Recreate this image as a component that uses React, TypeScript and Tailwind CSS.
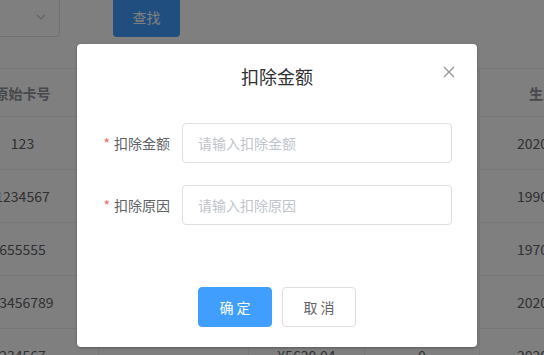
import React from "react";

const font = { fontFamily: '"Noto Sans CJK SC", "Noto Sans", sans-serif' };

const rows = [
  { card: "123", amount: "", count: "", date: "2020-09-10" },
  { card: "1234567", amount: "", count: "", date: "1990-01-01" },
  { card: "655555", amount: "", count: "", date: "1970-01-01" },
  { card: "23456789", amount: "", count: "", date: "2020-09-10" },
  { card: "234567", amount: "¥5620.04", count: "0", date: "2020-09-10" },
];

function ChevronDown() {
  return (
    <svg width="12" height="12" viewBox="0 0 12 12" fill="none">
      <path d="M2 4l4 4 4-4" stroke="#c0c4cc" strokeWidth="1.2" />
    </svg>
  );
}

function CloseIcon() {
  return (
    <svg width="12" height="12" viewBox="0 0 12 12" fill="none">
      <path d="M1 1l10 10M11 1L1 11" stroke="#909399" strokeWidth="1.2" />
    </svg>
  );
}

function FormRow({ label, placeholder }: { label: string; placeholder: string }) {
  return (
    <div className="flex items-center mb-[22px]">
      <label className="w-[80px] pr-3 text-right text-sm text-[#606266] leading-10 shrink-0">
        <span className="text-[#f56c6c] mr-1">*</span>
        {label}
      </label>
      <input
        className="flex-1 h-10 border border-[#dcdfe6] rounded px-[15px] text-sm text-[#606266] placeholder:text-[#c0c4cc] outline-none"
        placeholder={placeholder}
        style={font}
      />
    </div>
  );
}

export default function App() {
  return (
    <div className="relative w-[544px] h-[355px] overflow-hidden bg-white" style={font}>
      {/* Page behind */}
      <div className="flex items-end gap-[53px] -mt-[3px]">
        <div className="w-[80px] h-10 -ml-[20px] border border-[#dcdfe6] rounded flex items-center justify-end pr-[12px]">
          <ChevronDown />
        </div>
        <button className="w-[67px] h-10 rounded bg-[#409eff] text-white text-sm">查找</button>
      </div>

      <div className="mt-[31px] -ml-[53px] w-[700px] text-sm text-[#606266]">
        <div className="flex h-[49px] border-t border-b border-[#ebeef5] font-bold text-[#909399]">
          <div className="w-[152px] flex items-center justify-center border-r border-[#ebeef5]">原始卡号</div>
          <div className="w-[150px] border-r border-[#ebeef5]" />
          <div className="w-[116px] border-r border-[#ebeef5]" />
          <div className="w-[115px] border-r border-[#ebeef5]" />
          <div className="w-[120px] flex items-center pl-[49px] whitespace-nowrap">生成时间</div>
        </div>
        {rows.map((r) => (
          <div key={r.card} className="flex h-[53px] border-b border-[#ebeef5]">
            <div className="w-[152px] flex items-center justify-center border-r border-[#ebeef5]">{r.card}</div>
            <div className="w-[150px] border-r border-[#ebeef5]" />
            <div className="w-[116px] flex items-center justify-center border-r border-[#ebeef5]">{r.amount}</div>
            <div className="w-[115px] flex items-center justify-center border-r border-[#ebeef5]">{r.count}</div>
            <div className="w-[120px] flex items-center pl-[37px] whitespace-nowrap">{r.date}</div>
          </div>
        ))}
      </div>

      {/* Mask */}
      <div className="absolute inset-0 bg-black/50" />

      {/* Dialog */}
      <div className="absolute inset-0 flex justify-center pl-[10px]">
        <div className="mt-[44px] w-[400px] h-[303px] bg-white rounded-sm shadow-[0_1px_3px_rgba(0,0,0,0.3)] self-start">
          <div className="relative pt-5 px-5 pb-[10px]">
            <div className="text-center text-lg leading-6 text-[#303133]">扣除金额</div>
            <button className="absolute right-[22px] top-[22px]">
              <CloseIcon />
            </button>
          </div>
          <div className="pt-[25px] pl-[25px] pr-[25px]">
            <FormRow label="扣除金额" placeholder="请输入扣除金额" />
            <FormRow label="扣除原因" placeholder="请输入扣除原因" />
          </div>
          <div className="flex justify-center gap-[10px] pt-[40px]">
            <button className="w-[74px] h-10 rounded bg-[#409eff] border border-[#409eff] text-white text-sm">确 定</button>
            <button className="w-[74px] h-10 rounded bg-white border border-[#dcdfe6] text-[#606266] text-sm">取 消</button>
          </div>
        </div>
      </div>
    </div>
  );
}
